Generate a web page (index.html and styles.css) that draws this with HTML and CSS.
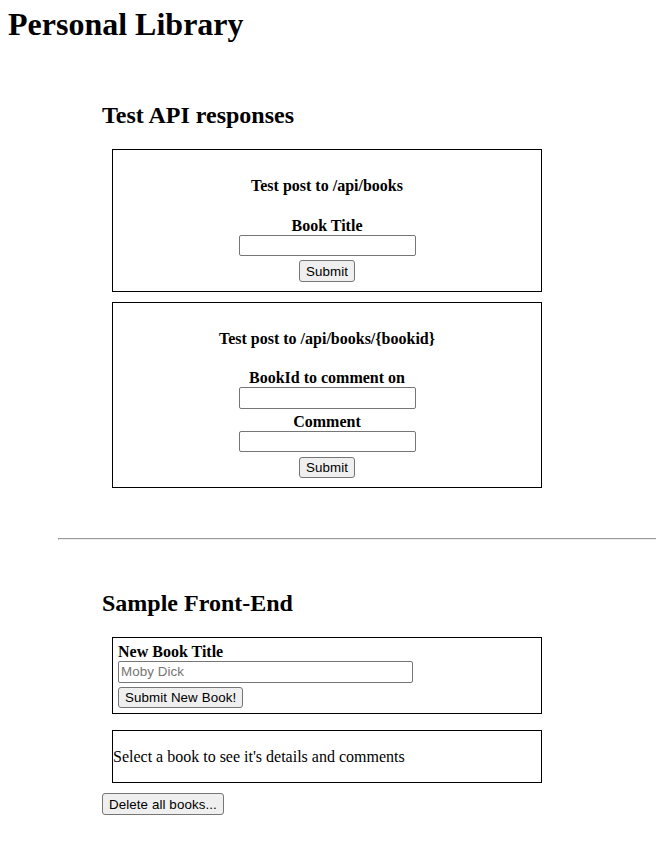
FILE: index.html
```html
<!DOCTYPE html>
<html>
<head>
<meta charset="utf-8">
<title>Personal Library</title>
<link rel="stylesheet" href="styles.css">
</head>
<body>
<header class="site-header">
  <h1 class="title">Personal Library</h1>
</header>
<section class="panel api">
  <h2 class="section-title">Test API responses</h2>
  <form class="box test-form">
    <h4 class="form-title">Test post to /api/books</h4>
    <label class="field-label" for="title">Book Title</label>
    <input class="text-input" type="text" id="title" name="title" value="">
    <input class="btn" type="submit" value="Submit">
  </form>
  <form class="box test-form">
    <h4 class="form-title">Test post to /api/books/{bookid}</h4>
    <label class="field-label" for="idinputtest">BookId to comment on</label>
    <input class="text-input" type="text" id="idinputtest" name="id" value="">
    <label class="field-label" for="commentinput">Comment</label>
    <input class="text-input" type="text" id="commentinput" name="comment" value="">
    <input class="btn" type="submit" value="Submit">
  </form>
</section>
<hr class="divider">
<section class="panel ui">
  <h2 class="section-title">Sample Front-End</h2>
  <form class="box new-book">
    <label class="field-label" for="bookTitleToAdd">New Book Title</label>
    <input class="text-input wide" type="text" id="bookTitleToAdd" name="title" placeholder="Moby Dick">
    <button class="btn" type="submit">Submit New Book!</button>
  </form>
  <div class="box detail">
    <p class="detail-title">Select a book to see it's details and comments</p>
  </div>
  <button class="btn" type="button">Delete all books...</button>
</section>
</body>
</html>
```
FILE: styles.css
```css
body {
  margin: 8px;
  font-family: "Liberation Serif", "Times New Roman", serif;
  font-size: 16px;
  color: #000;
  background: #fff;
}

.title {
  margin: 0;
  font-size: 32px;
  line-height: 32px;
  font-weight: bold;
}

.panel {
  width: 450px;
  margin-left: 94px;
}

.api {
  padding-top: 62px;
}

.section-title {
  margin: 0 0 20px;
  font-size: 24px;
  font-weight: bold;
}

.box {
  border: 1px solid #000;
  margin: 10px;
}

.test-form {
  padding: 6px 5px 5px;
  text-align: center;
}

.form-title {
  margin: 21.28px 0;
  font-size: 16px;
  font-weight: bold;
}

.field-label {
  display: block;
  font-weight: bold;
}

.text-input {
  display: block;
  box-sizing: border-box;
  width: 177px;
  height: 21.333px;
  margin: 0 auto 4.5px;
  padding: 1px 2px;
  border: 1px solid #767676;
  border-radius: 2px;
  background: #fff;
  font: 13.333px "Liberation Sans", Arial, sans-serif;
  letter-spacing: 0.1px;
  color: #000;
}

.text-input::placeholder {
  color: #757575;
}

.text-input.wide {
  width: 295px;
  margin: 0 0 4.5px;
}

.btn {
  box-sizing: border-box;
  height: 21.333px;
  padding: 1px 6px;
  border: 1px solid #767676;
  border-radius: 3px;
  background: #efefef;
  color: #000;
  font: 13.333px "Liberation Sans", Arial, sans-serif;
  letter-spacing: 0.1px;
}

.test-form .btn {
  display: block;
  margin: 0 auto 4px;
}

.new-book {
  padding: 5px;
  margin-bottom: 16px;
}

.new-book .btn {
  display: block;
  margin: 0;
}

.detail-title {
  margin: 16.5px 0;
}

.divider {
  box-sizing: border-box;
  width: 606px;
  height: 2px;
  margin: 50px 0 50px 50px;
  border-style: solid;
  border-width: 1px;
  border-color: #9a9a9a #eeeeee #eeeeee #9a9a9a;
}
```
